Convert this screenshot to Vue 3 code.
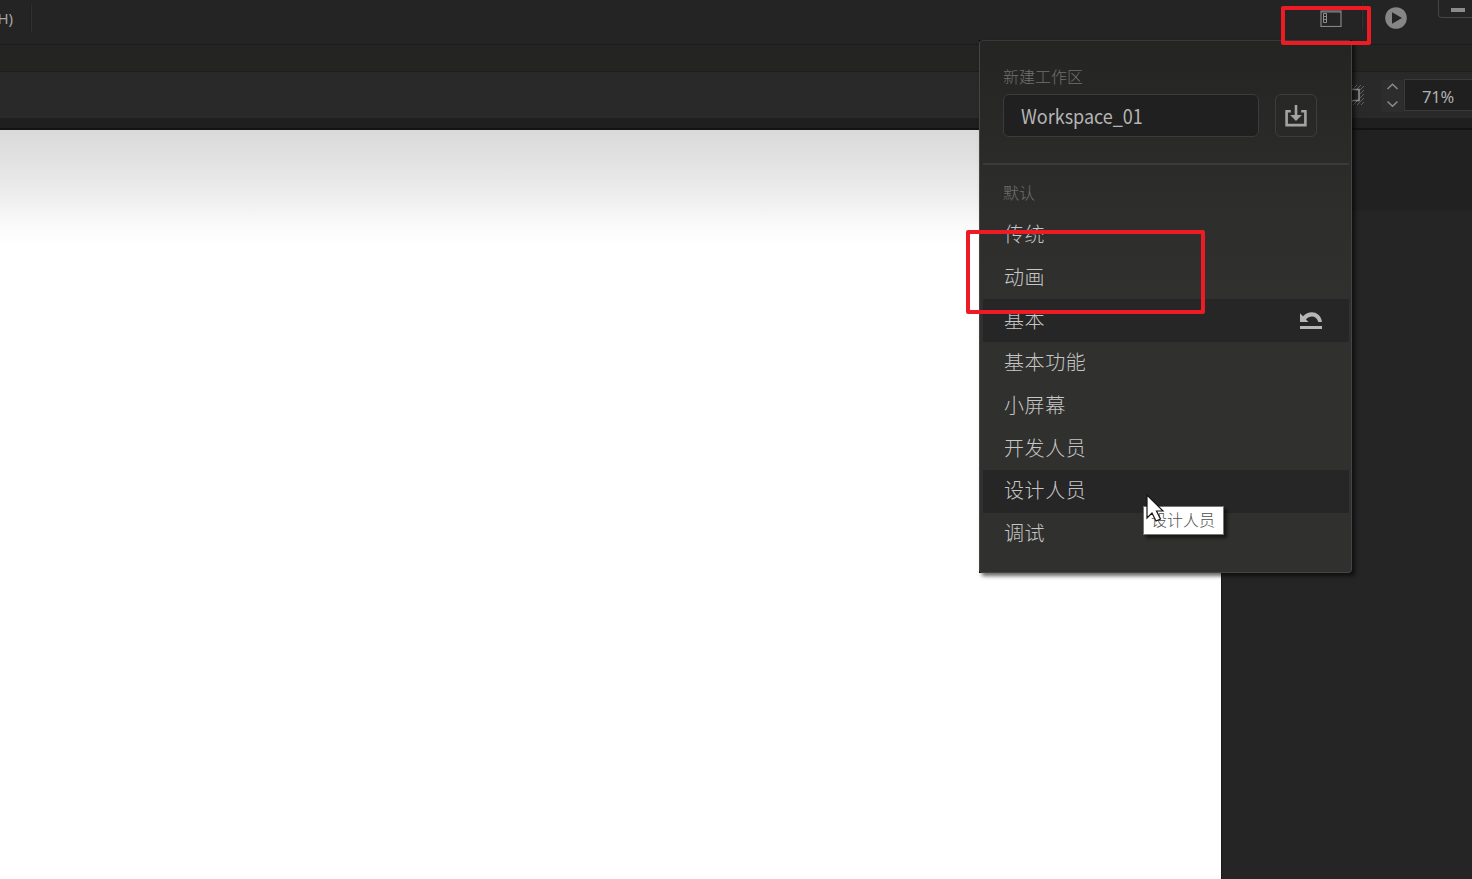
<script setup>
const workspaces = [
  { name: '传统' },
  { name: '动画' },
  { name: '基本', shaded: true, reset: true },
  { name: '基本功能' },
  { name: '小屏幕' },
  { name: '开发人员' },
  { name: '设计人员', shaded: true },
  { name: '调试' }
]
</script>

<template>
  <div class="app">
    <header class="menubar">
      <span class="menu-item">H)</span>
      <i class="separator"></i>
      <div class="menu-tools">
        <svg class="layout-icon" width="22" height="17" viewBox="0 0 22 17" fill="none">
          <rect x="1" y="1" width="20" height="15.5" stroke="#858585" stroke-width="1.2" />
          <path d="M1 2h20" stroke="#858585" />
          <path d="M3.5 3.5h3v9h-3zM3.5 6.5h3M3.5 9.5h3" stroke="#8d8d8d" />
        </svg>
        <i class="separator tool-separator"></i>
        <svg class="play-icon" width="22" height="22" viewBox="0 0 22 22">
          <circle cx="11" cy="11" r="10.8" fill="#868686" />
          <path d="M7 5.2 17 11 7 16.8z" fill="#242424" />
        </svg>
        <div class="minimize"><i></i></div>
      </div>
    </header>
    <div class="tabstrip"></div>
    <div class="optionbar">
      <svg class="clip-icon" width="14" height="22" viewBox="0 0 14 22">
        <path d="M0 4 3 1M0 8 7 1M1 11 11 1M0 16 14 2M0 20 14 6M3 21 14 10M7 21 14 14M11 21 14 18" stroke="#626262" />
        <path d="M0 5.5h9v11H0" fill="#262626" stroke="#969696" stroke-width="1.5" />
      </svg>
      <svg class="stepper" width="22" height="32" viewBox="0 0 22 32" fill="none" stroke="#8c8c8c" stroke-width="1.5">
        <path d="m6.5 9 5-4.7 5 4.7M6.5 21.5l5 4.7 5-4.7" />
      </svg>
      <div class="zoom-value">71%</div>
    </div>
    <div class="stage-edge"></div>
    <main class="body">
      <div class="stage"></div>
      <aside class="dock"></aside>
    </main>

    <div class="popup-back"></div>
    <section class="popup">
      <div class="create">
        <div class="caption">新建工作区</div>
        <div class="create-row">
          <div class="field"><span>Workspace_01</span></div>
          <div class="save">
            <svg width="22" height="22" viewBox="0 0 22 22" fill="none">
              <path d="M5.8 6.3H1.6v13.8h18.8V6.3h-4.2" stroke="#a3a3a3" stroke-width="2.6" />
              <path d="M11 0v13" stroke="#a3a3a3" stroke-width="2.6" />
              <path d="M5.2 10h11.6L11 16z" fill="#a3a3a3" />
            </svg>
          </div>
        </div>
      </div>
      <div class="presets">
        <div class="caption default-caption">默认</div>
        <div v-for="w in workspaces" :key="w.name" class="row" :class="{ shaded: w.shaded }">
          <span>{{ w.name }}</span>
          <svg v-if="w.reset" class="reset" width="22" height="18" viewBox="0 0 22 18">
            <path d="M0 1.2V10h8.5L6 7.4C10 3.4 16 3.2 18.4 10H22C20.6-.5 9.5-2.7 3 4.3z" fill="#b7b7b7" />
            <path d="M0 14h22v3H0z" fill="#b7b7b7" />
          </svg>
        </div>
      </div>
    </section>

    <div class="mark mark-top"></div>
    <div class="mark mark-list"></div>
    <div class="tooltip">设计人员</div>
    <svg class="cursor" width="20" height="30" viewBox="0 0 20 30">
      <path d="M1 1v23l5-5 4 8 4.5-2-4-8H17z" fill="#fff" stroke="#161616" stroke-width="1.2" />
    </svg>
  </div>
</template>

<style>
body {
  background: #252525;
  overflow: hidden;
}
</style>

<style scoped>
* {
  box-sizing: border-box;
}
.app {
  position: relative;
  display: flex;
  flex-direction: column;
  width: 1472px;
  height: 879px;
  overflow: hidden;
  background: #252525;
  font-family: "Noto Sans CJK SC", "Noto Sans", sans-serif;
}
.menubar {
  display: flex;
  height: 45px;
  flex: none;
  background: #242424;
  border-bottom: 1px solid #1b1b1b;
}
.menu-item {
  display: flex;
  justify-content: flex-end;
  width: 13px;
  font: 15px/36px "Noto Sans", sans-serif;
  color: #a5a5a5;
}
.separator {
  width: 2px;
  height: 27px;
  margin: 5px 0 0 17px;
  background: #323232;
  border-left: 1px solid #1e1e1e;
}
.menu-tools {
  display: flex;
  margin-left: auto;
}
.layout-icon {
  margin: 10px -1px 0 1px;
}
.tool-separator {
  margin: 3px 0 0 20px;
}
.play-icon {
  margin: 7px 0 0 22px;
}
.minimize {
  width: 34px;
  height: 19px;
  margin: -1px 0 0 31px;
  border: 1px solid #454545;
  border-right: 0;
  border-radius: 0 0 0 4px;
}
.minimize i {
  display: block;
  width: 14px;
  height: 4px;
  margin: 8px 0 0 12px;
  background: #8b8b8b;
}
.tabstrip {
  height: 27px;
  flex: none;
  background: #242422;
  border-bottom: 1px solid #1e1e1e;
}
.optionbar {
  display: flex;
  align-items: flex-start;
  justify-content: flex-end;
  height: 46px;
  flex: none;
  background: #292929;
}
.clip-icon {
  margin-top: 12px;
}
.stepper {
  margin: 8px 1px 0 17px;
  background: #2d2d2d;
}
.zoom-value {
  width: 68px;
  height: 32px;
  margin-top: 7px;
  padding-left: 17px;
  background: #1f1f1f;
  border: 1px solid #3a3a3a;
  border-right: 0;
  font: 16.5px/33px "Noto Sans", sans-serif;
  letter-spacing: -0.2px;
  color: #b0b0b0;
}
.stage-edge {
  height: 12px;
  flex: none;
  background: linear-gradient(#1f1f1f 10px, #131313 10px);
}
.body {
  display: flex;
  flex: 1;
}
.stage {
  width: 1221px;
  background: linear-gradient(#d9d9d9, #e1e1e1 28px, #eeeeee 66px, #fafafa 95px, #fff 115px);
}
.dock {
  flex: 1;
  background: linear-gradient(#212121 80px, #252525 81px);
  border-left: 1px solid #191919;
}
.popup,
.popup-back {
  position: absolute;
  left: 979px;
  top: 40px;
  width: 373px;
  height: 533px;
}
/* square backing that shows black behind the rounded corners */
.popup-back {
  background: #0c0c0c;
  box-shadow: 3px 3px 4px #0009;
}
.popup {
  padding: 0 2px 0 3px;
  background: linear-gradient(#242422, #2d2d2b 160px, #30302e 260px);
  border: 1px solid #454545;
  border-top-color: #383838;
  border-radius: 4px;
}
.create {
  height: 124px;
  padding: 23px 0 0 20px;
  border-bottom: 2px solid #3b3b3b;
}
.caption {
  height: 27px;
  font-size: 16px;
  line-height: 25px;
  font-weight: 300;
  color: #707070;
}
.create-row {
  display: flex;
  gap: 16px;
  margin-top: 3px;
}
.field {
  width: 256px;
  height: 43px;
  padding-left: 17px;
  background: #202020;
  border: 1px solid #3b3b3b;
  border-radius: 6px;
  font-size: 20px;
  line-height: 41px;
  color: #b5b5b5;
}
.field span {
  display: inline-block;
  transform: scaleX(0.9);
  transform-origin: left;
}
.save {
  display: grid;
  place-items: center;
  width: 42px;
  height: 43px;
  border: 1px solid #3d3d3d;
  border-radius: 6px;
}
.default-caption {
  height: 49px;
  padding: 15px 0 0 20px;
}
.row {
  display: flex;
  align-items: center;
  height: 42.67px;
  padding: 0 27px 3px 21px;
  font-size: 20px;
  font-weight: 300;
  letter-spacing: 0.6px;
  color: #c6c6c6;
}
.shaded {
  background: #262626;
}
.reset {
  margin: 3px 0 0 auto;
}
.mark {
  position: absolute;
  border: 4px solid #ed1c24;
  border-radius: 2px;
}
.mark-top {
  left: 1281px;
  top: 6px;
  width: 90px;
  height: 39px;
}
.mark-list {
  left: 966px;
  top: 230px;
  width: 239px;
  height: 84px;
}
.tooltip {
  position: absolute;
  left: 1143px;
  top: 506px;
  width: 81px;
  height: 29px;
  padding-left: 7px;
  background: #fff;
  border: 1px solid #777;
  box-shadow: 3px 3px 3px #0008;
  font-size: 16px;
  font-weight: 300;
  line-height: 25px;
  color: #505050;
}
.cursor {
  position: absolute;
  left: 1146px;
  top: 494px;
}
</style>
